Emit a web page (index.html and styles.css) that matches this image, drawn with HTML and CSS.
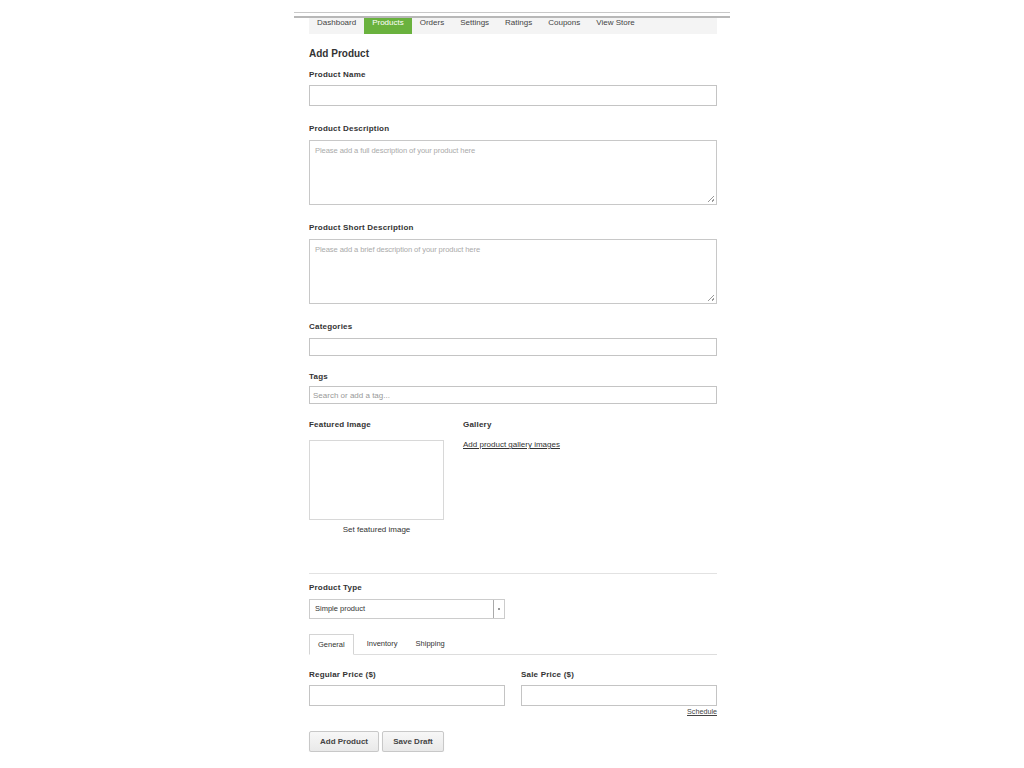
FILE: index.html
```html
<!DOCTYPE html>
<html>
<head>
<meta charset="utf-8">
<link rel="stylesheet" href="styles.css">
</head>
<body>
<div class="wrap">
  <div class="topline"></div>
  <div class="inner">
    <nav class="nav">
      <a class="nav-item">Dashboard</a>
      <a class="nav-item active">Products</a>
      <a class="nav-item">Orders</a>
      <a class="nav-item">Settings</a>
      <a class="nav-item">Ratings</a>
      <a class="nav-item">Coupons</a>
      <a class="nav-item">View Store</a>
    </nav>

    <h2 class="title">Add Product</h2>

    <div class="label l-first">Product Name</div>
    <div class="input h21"></div>

    <div class="label l-gap">Product Description</div>
    <div class="textarea"><span class="ph">Please add a full description of your product here</span><span class="grip"></span></div>

    <div class="label l-gap">Product Short Description</div>
    <div class="textarea"><span class="ph">Please add a brief description of your product here</span><span class="grip"></span></div>

    <div class="label l-gap">Categories</div>
    <div class="input h18"></div>

    <div class="label l-tags">Tags</div>
    <div class="input h18 tags"><span class="ph2">Search or add a tag...</span></div>

    <div class="media">
      <div class="featured">
        <div class="label lm">Featured Image</div>
        <div class="imgbox"></div>
        <div class="setimg">Set featured image</div>
      </div>
      <div class="gallery">
        <div class="label">Gallery</div>
        <a class="link">Add product gallery images</a>
      </div>
    </div>

    <div class="hr"></div>

    <div class="label">Product Type</div>
    <div class="select"><span class="sel-text">Simple product</span><span class="sel-arrow"><i></i></span></div>

    <div class="tabs">
      <span class="tab active">General</span>
      <span class="tab">Inventory</span>
      <span class="tab">Shipping</span>
    </div>

    <div class="prices">
      <div class="price">
        <div class="label">Regular Price ($)</div>
        <div class="input h21"></div>
      </div>
      <div class="price">
        <div class="label">Sale Price ($)</div>
        <div class="input h21"></div>
        <a class="schedule">Schedule</a>
      </div>
    </div>

    <div class="buttons">
      <button class="btn b1">Add Product</button>
      <button class="btn b2">Save Draft</button>
    </div>
  </div>
</div>
</body>
</html>
```

FILE: styles.css
```css
* { box-sizing: border-box; }
body {
  margin: 0;
  background: #fff;
  font-family: "Liberation Sans", Arial, sans-serif;
  color: #333;
}
.wrap {
  margin-left: 294px;
  width: 436px;
  padding-top: 12px;
}
.topline {
  height: 6px;
  border-top: 1px solid #c8c8c8;
  border-bottom: 2px solid #b8b8b8;
}
.inner {
  padding: 0 13px 0 15px;
}
.nav {
  display: flex;
  height: 16px;
  background: #f4f4f4;
  font-size: 8px;
  line-height: 10px;
}
.nav-item {
  padding: 0 8px;
  color: #444;
  height: 16px;
}
.nav-item.active {
  background: #6ab23e;
  color: #fff;
}
.title {
  margin: 13px 0 0;
  font-size: 10px;
  line-height: 14px;
  font-weight: bold;
  color: #333;
}
.label {
  font-size: 8px;
  line-height: 10px;
  font-weight: bold;
  color: #333;
  letter-spacing: 0.2px;
  margin-bottom: 5px;
}
.l-first { margin-top: 9px; }
.l-gap { margin-top: 18px; margin-bottom: 6px; }
.l-tags { margin-top: 16px; margin-bottom: 4px; }
.input {
  border: 1px solid #c4c4c4;
  background: #fff;
}
.h21 { height: 21px; }
.h18 { height: 18px; }
.tags {
  display: flex;
  align-items: center;
  padding-left: 3px;
}
.ph2 {
  font-size: 8px;
  color: #999;
}
.textarea {
  position: relative;
  height: 65px;
  border: 1px solid #c8c8c8;
  padding: 5px 5px;
  font-size: 7.6px;
  line-height: 9px;
}
.ph {
  color: #aaa;
  letter-spacing: -0.1px;
}
.grip {
  position: absolute;
  right: 2px;
  bottom: 2px;
  width: 6px;
  height: 6px;
  background: linear-gradient(135deg, transparent 45%, #999 45%, #999 55%, transparent 55%, transparent 75%, #999 75%, #999 85%, transparent 85%);
}
.media {
  display: flex;
  margin-top: 16px;
  height: 120px;
}
.featured {
  width: 135px;
}
.label.lm { margin-bottom: 10px; }
.imgbox {
  height: 80px;
  border: 1px solid #d8d8d8;
}
.setimg {
  text-align: center;
  font-size: 8px;
  line-height: 10px;
  margin-top: 5px;
  color: #333;
}
.gallery {
  margin-left: 19px;
}
.link {
  display: block;
  font-size: 8px;
  line-height: 10px;
  color: #333;
  text-decoration: underline;
  margin-top: 10px;
}
.hr {
  height: 1px;
  background: #e2e2e2;
  margin-top: 33px;
  margin-bottom: 9px;
}
.select {
  display: flex;
  width: 196px;
  height: 20px;
  border: 1px solid #ccc;
  margin-top: 6px;
}
.sel-text {
  flex: 1;
  font-size: 7.5px;
  line-height: 18px;
  padding-left: 5px;
  color: #333;
}
.sel-arrow {
  width: 11px;
  border-left: 1px solid #aaa;
  display: flex;
  align-items: center;
  justify-content: center;
}
.sel-arrow i {
  display: block;
  width: 2px;
  height: 2px;
  background: #999;
}
.tabs {
  display: flex;
  margin-top: 15px;
  height: 21px;
  border-bottom: 1px solid #ddd;
  font-size: 7.5px;
}
.tab {
  padding: 0 12px 0 0;
  line-height: 20px;
  color: #333;
}
.tab.active {
  border: 1px solid #d4d4d4;
  border-bottom: 1px solid #fff;
  height: 21px;
  padding: 0 8px;
  margin-right: 13px;
  background: #fff;
}
.tab + .tab + .tab { padding-left: 6px; }
.prices {
  display: flex;
  justify-content: space-between;
  margin-top: 15px;
}
.price {
  width: 196px;
  display: flex;
  flex-direction: column;
}
.price .label { margin-bottom: 5px; }
.schedule {
  align-self: flex-end;
  font-size: 7.2px;
  line-height: 10px;
  text-decoration: underline;
  color: #444;
  margin-top: 1px;
}
.buttons {
  display: flex;
  gap: 3px;
  margin-top: 14px;
}
.btn {
  height: 21px;
  border: 1px solid #c8c8c8;
  border-radius: 2px;
  background: linear-gradient(#f7f7f7, #e9e9e9);
  font-family: "Liberation Sans", Arial, sans-serif;
  font-size: 8px;
  font-weight: bold;
  color: #444;
  padding: 0;
  box-shadow: 0 1px 1px rgba(0,0,0,0.1);
}
.b1 { width: 70px; }
.b2 { width: 62px; }
```
